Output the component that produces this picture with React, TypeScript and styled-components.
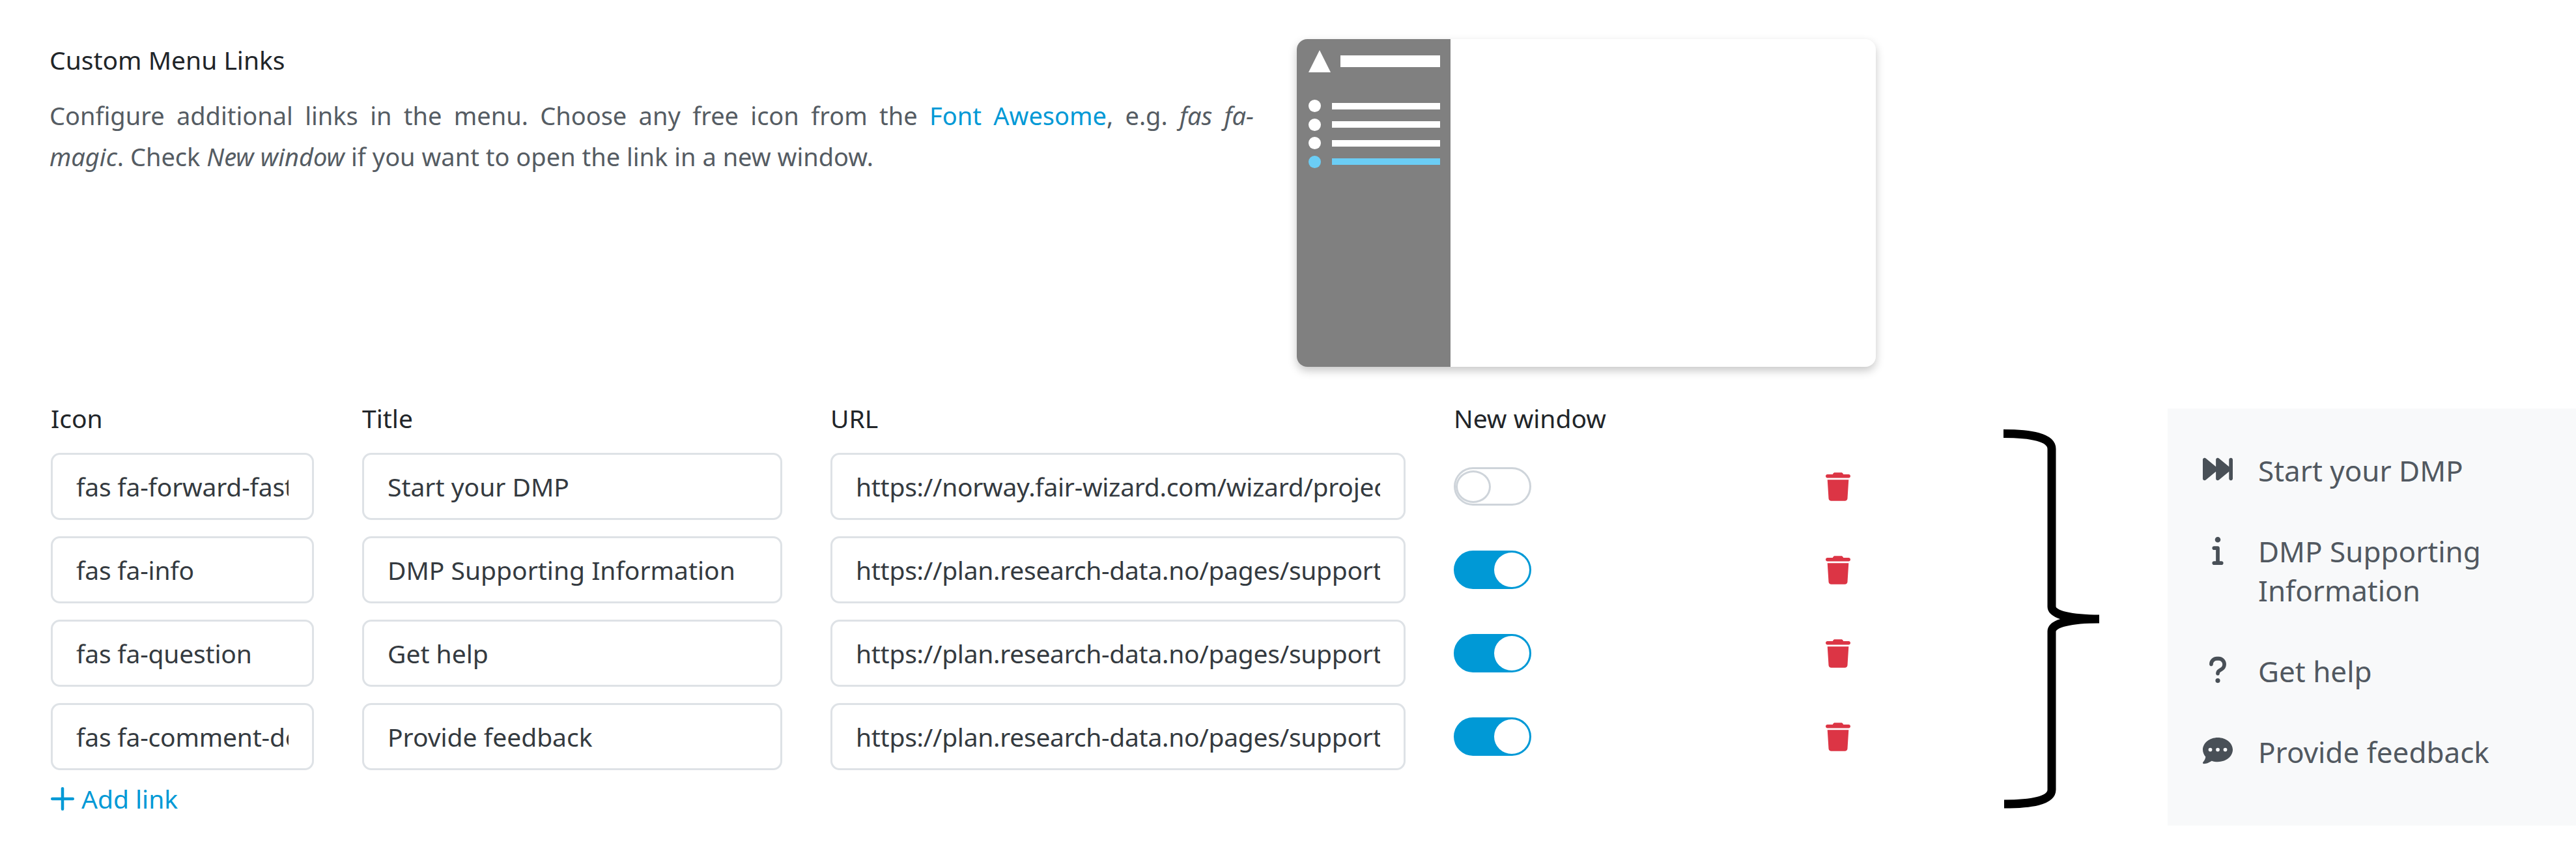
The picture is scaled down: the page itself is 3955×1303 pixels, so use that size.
import React from 'react';
import styled, { createGlobalStyle } from 'styled-components';
import { Plus } from 'lucide-react';
import { FaForwardFast, FaInfo, FaQuestion, FaCommentDots, FaTrash } from 'react-icons/fa6';

const GlobalStyle = createGlobalStyle`
    html, body {
        margin: 0;
        background: #fff;
    }
    body {
        font-family: "Noto Sans", "Open Sans", sans-serif;
        color: #212529;
    }
`

const links = [
    { icon: 'fas fa-forward-fast', title: 'Start your DMP', url: 'https://norway.fair-wizard.com/wizard/projects/create', newWindow: false },
    { icon: 'fas fa-info', title: 'DMP Supporting Information', url: 'https://plan.research-data.no/pages/support', newWindow: true },
    { icon: 'fas fa-question', title: 'Get help', url: 'https://plan.research-data.no/pages/support', newWindow: true },
    { icon: 'fas fa-comment-dots', title: 'Provide feedback', url: 'https://plan.research-data.no/pages/support', newWindow: true },
];

const App: React.FC = () => {
    return (
        <Page>
            <GlobalStyle />
            <TopRow>
                <Intro>
                    <Heading>Custom Menu Links</Heading>
                    <Description>
                        <FullLine>Configure additional links in the menu. Choose any free icon from the <Link>Font Awesome</Link>, e.g. <em>fas fa-</em></FullLine>
                        <span><em>magic</em>. Check <em>New window</em> if you want to open the link in a new window.</span>
                    </Description>
                </Intro>
                <Preview>
                    <PreviewSidebar>
                        <PreviewHead>
                            <PreviewLogo />
                            <PreviewTitle />
                        </PreviewHead>
                        <PreviewMenu>
                            <PreviewItem><PreviewDot /><PreviewBar /></PreviewItem>
                            <PreviewItem><PreviewDot /><PreviewBar /></PreviewItem>
                            <PreviewItem><PreviewDot /><PreviewBar /></PreviewItem>
                            <PreviewItem><PreviewDot $active /><PreviewBar $active /></PreviewItem>
                        </PreviewMenu>
                    </PreviewSidebar>
                </Preview>
            </TopRow>
            <BottomRow>
                <div>
                    <LinkGrid>
                        <Label>Icon</Label>
                        <Label>Title</Label>
                        <Label>URL</Label>
                        <Label>New window</Label>
                        <span />
                        {links.map((link) => (
                            <React.Fragment key={link.title}>
                                <Input readOnly $tracking="-0.2px" value={link.icon} />
                                <Input readOnly value={link.title} />
                                <Input readOnly $tracking="-0.28px" value={link.url} />
                                <ToggleCell>
                                    <Toggle $on={link.newWindow}><Knob $on={link.newWindow} /></Toggle>
                                </ToggleCell>
                                <TrashCell><FaTrash /></TrashCell>
                            </React.Fragment>
                        ))}
                    </LinkGrid>
                    <AddLink><Plus size={54} strokeWidth={2} />Add link</AddLink>
                </div>
                <Brace viewBox="0 0 147 582" width="147" height="582">
                    <path
                        d="M0 6.5 C42 6.5 74 12 74 30 L74 272 C74 285 105 291 147 291 C105 291 74 297 74 310 L74 553 C74 570 42 575 1 575"
                        fill="none"
                        stroke="#000"
                        strokeWidth="13"
                    />
                </Brace>
                <MenuPanel>
                    <MenuItem>
                        <MenuIcon><FaForwardFast /></MenuIcon>
                        <MenuText>Start your DMP</MenuText>
                    </MenuItem>
                    <MenuItem>
                        <MenuIcon><FaInfo /></MenuIcon>
                        <MenuText>DMP Supporting Information</MenuText>
                    </MenuItem>
                    <MenuItem>
                        <MenuIcon><FaQuestion /></MenuIcon>
                        <MenuText>Get help</MenuText>
                    </MenuItem>
                    <MenuItem>
                        <MenuIcon><FaCommentDots /></MenuIcon>
                        <MenuText>Provide feedback</MenuText>
                    </MenuItem>
                </MenuPanel>
            </BottomRow>
        </Page>
    );
}

const Page = styled.div`
    width: 3955px;
    height: 1303px;
    box-sizing: border-box;
    padding-top: 60px;
    overflow: hidden;
`

const TopRow = styled.div`
    display: flex;
    padding-left: 76px;
`

const Intro = styled.div`
    width: 1849px;
    padding-top: 8px;
`

const Heading = styled.div`
    font-size: 39px;
    line-height: 48px;
    color: #212529;
`

const Description = styled.div`
    margin: 30px 0 0;
    font-size: 38px;
    line-height: 63px;
    color: #555c63;
`

const FullLine = styled.div`
    text-align: justify;
    text-align-last: justify;
`

const Link = styled.span`
    color: #0099d6;
`

const Preview = styled.div`
    display: flex;
    width: 889px;
    height: 503px;
    margin-left: 66px;
    border-radius: 16px;
    background: #fff;
    box-shadow: 0 6px 14px rgba(0, 0, 0, 0.22);
    overflow: hidden;
`

const PreviewSidebar = styled.div`
    width: 236px;
    box-sizing: border-box;
    padding: 17px 16px 0 18px;
    background: #808080;
`

const PreviewHead = styled.div`
    display: flex;
    align-items: center;
    gap: 15px;
`

const PreviewLogo = styled.div`
    width: 0;
    height: 0;
    border-left: 17px solid transparent;
    border-right: 17px solid transparent;
    border-bottom: 34px solid #fff;
`

const PreviewTitle = styled.div`
    flex: 1;
    height: 18px;
    background: #fff;
`

const PreviewMenu = styled.div`
    display: flex;
    flex-direction: column;
    gap: 9.5px;
    margin-top: 42px;
`

const PreviewItem = styled.div`
    display: flex;
    align-items: center;
    gap: 17px;
`

const PreviewDot = styled.div<{ $active?: boolean }>`
    width: 19px;
    height: 19px;
    border-radius: 50%;
    background: ${(p) => (p.$active ? '#6bcdf5' : '#fff')};
`

const PreviewBar = styled.div<{ $active?: boolean }>`
    flex: 1;
    height: 10px;
    background: ${(p) => (p.$active ? '#6bcdf5' : '#fff')};
`

const BottomRow = styled.div`
    display: flex;
    align-items: flex-start;
    margin-top: 64px;
    padding-left: 78px;
`

const LinkGrid = styled.div`
    display: grid;
    grid-template-columns: 404px 645px 883px 497px 38px;
    column-gap: 74px;
    row-gap: 25px;
`

const Label = styled.div`
    font-size: 39px;
    line-height: 30px;
    margin-bottom: 13px;
    color: #212529;
`

const Input = styled.input<{ $tracking?: string }>`
    width: 100%;
    height: 103px;
    box-sizing: border-box;
    padding: 0 36px;
    border: 3px solid #dee2e6;
    border-radius: 14px;
    background: #fff;
    font-family: inherit;
    font-size: 39px;
    letter-spacing: ${(p) => p.$tracking || '0'};
    color: #343a40;
    outline: none;
`

const ToggleCell = styled.div`
    display: flex;
    align-items: center;
`

const Toggle = styled.div<{ $on: boolean }>`
    display: flex;
    align-items: center;
    justify-content: ${(p) => (p.$on ? 'flex-end' : 'flex-start')};
    width: 119px;
    height: 59px;
    box-sizing: border-box;
    border: 3px solid ${(p) => (p.$on ? '#0099d6' : '#ced4da')};
    border-radius: 30px;
    background: ${(p) => (p.$on ? '#0099d6' : '#fff')};
`

const Knob = styled.div<{ $on: boolean }>`
    width: 54px;
    height: ${(p) => (p.$on ? '53px' : '50px')};
    box-sizing: border-box;
    border-radius: 50%;
    background: #fff;
    border: ${(p) => (p.$on ? 'none' : '3px solid #ced4da')};
`

const TrashCell = styled.div`
    display: flex;
    align-items: center;
    justify-content: center;
    color: #dc3545;
    font-size: 44px;
`

const AddLink = styled.div`
    display: flex;
    align-items: center;
    gap: 2px;
    margin-top: 17px;
    font-size: 39px;
    line-height: 50px;
    color: #0099d6;
    svg {
        margin-left: -9px;
    }
`

const Brace = styled.svg`
    flex: none;
    margin: 32px 0 0 235px;
`

const MenuPanel = styled.div`
    display: flex;
    flex-direction: column;
    gap: 64px;
    flex: none;
    width: 627px;
    height: 640px;
    box-sizing: border-box;
    margin-left: 105px;
    padding: 65px 0 0 53px;
    background: #f8f9fa;
`

const MenuItem = styled.div`
    display: flex;
    gap: 38px;
`

const MenuIcon = styled.div`
    display: flex;
    align-items: center;
    justify-content: center;
    width: 48px;
    height: 56px;
    flex: none;
    font-size: 46px;
    color: #495057;
`

const MenuText = styled.div`
    max-width: 400px;
    font-size: 44px;
    line-height: 60px;
    color: #515860;
`

export default App;
